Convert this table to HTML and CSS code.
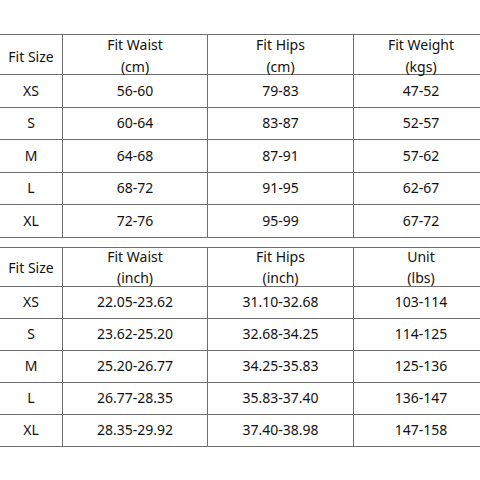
FILE: index.html
```html
<!DOCTYPE html>
<html lang="en">
<head>
<meta charset="utf-8">
<title>Size Chart</title>
<link rel="stylesheet" href="styles.css">
</head>
<body>
<div class="sheet">
  <div class="chart chart-cm">
    <div class="row head">
      <div class="cell single">Fit Size</div>
      <div class="cell"><div class="two">Fit Waist<br>(cm)</div></div>
      <div class="cell"><div class="two">Fit Hips<br>(cm)</div></div>
      <div class="cell"><div class="two">Fit Weight<br>(kgs)</div></div>
    </div>
    <div class="row"><div class="cell">XS</div><div class="cell">56-60</div><div class="cell">79-83</div><div class="cell">47-52</div></div>
    <div class="row"><div class="cell">S</div><div class="cell">60-64</div><div class="cell">83-87</div><div class="cell">52-57</div></div>
    <div class="row"><div class="cell">M</div><div class="cell">64-68</div><div class="cell">87-91</div><div class="cell">57-62</div></div>
    <div class="row"><div class="cell">L</div><div class="cell">68-72</div><div class="cell">91-95</div><div class="cell">62-67</div></div>
    <div class="row"><div class="cell">XL</div><div class="cell">72-76</div><div class="cell">95-99</div><div class="cell">67-72</div></div>
  </div>
  <div class="chart chart-inch">
    <div class="row head">
      <div class="cell single">Fit Size</div>
      <div class="cell"><div class="two">Fit Waist<br>(inch)</div></div>
      <div class="cell"><div class="two">Fit Hips<br>(inch)</div></div>
      <div class="cell"><div class="two">Unit<br>(lbs)</div></div>
    </div>
    <div class="row"><div class="cell">XS</div><div class="cell">22.05-23.62</div><div class="cell">31.10-32.68</div><div class="cell">103-114</div></div>
    <div class="row"><div class="cell">S</div><div class="cell">23.62-25.20</div><div class="cell">32.68-34.25</div><div class="cell">114-125</div></div>
    <div class="row"><div class="cell">M</div><div class="cell">25.20-26.77</div><div class="cell">34.25-35.83</div><div class="cell">125-136</div></div>
    <div class="row"><div class="cell">L</div><div class="cell">26.77-28.35</div><div class="cell">35.83-37.40</div><div class="cell">136-147</div></div>
    <div class="row"><div class="cell">XL</div><div class="cell">28.35-29.92</div><div class="cell">37.40-38.98</div><div class="cell">147-158</div></div>
  </div>
</div>
</body>
</html>
```

FILE: styles.css
```css
html, body {
  margin: 0;
  padding: 0;
  background: #ffffff;
  overflow: hidden;
}

body {
  width: 480px;
  height: 480px;
  font-family: "Noto Sans", "Open Sans", sans-serif;
  font-size: 14px;
  color: #111111;
}

.sheet {
  width: 488px;
  padding-top: 34px;
  display: flex;
  flex-direction: column;
  gap: 9px;
}

.chart {
  border-top: 1px solid #6e6e6e;
}

.row {
  display: grid;
  grid-template-columns: 63px 145px 146px 134px;
  border-bottom: 1px solid #6e6e6e;
  height: 32.5px;
  box-sizing: border-box;
}

.chart-inch .row {
  height: 32px;
}

.chart-cm .row.head {
  height: 40px;
}

.chart-inch .row.head {
  height: 39px;
}

.cell {
  border-right: 1px solid #6e6e6e;
  display: flex;
  align-items: center;
  justify-content: center;
  text-align: center;
  white-space: nowrap;
  line-height: 20px;
}

.cell:last-child {
  border-right: none;
}

.head .cell {
  align-items: flex-start;
}

.head .cell.single {
  align-items: center;
}

.two {
  line-height: 22px;
  margin-top: -1px;
}

.chart-inch .two {
  line-height: 21px;
  margin-top: -2px;
}
```
